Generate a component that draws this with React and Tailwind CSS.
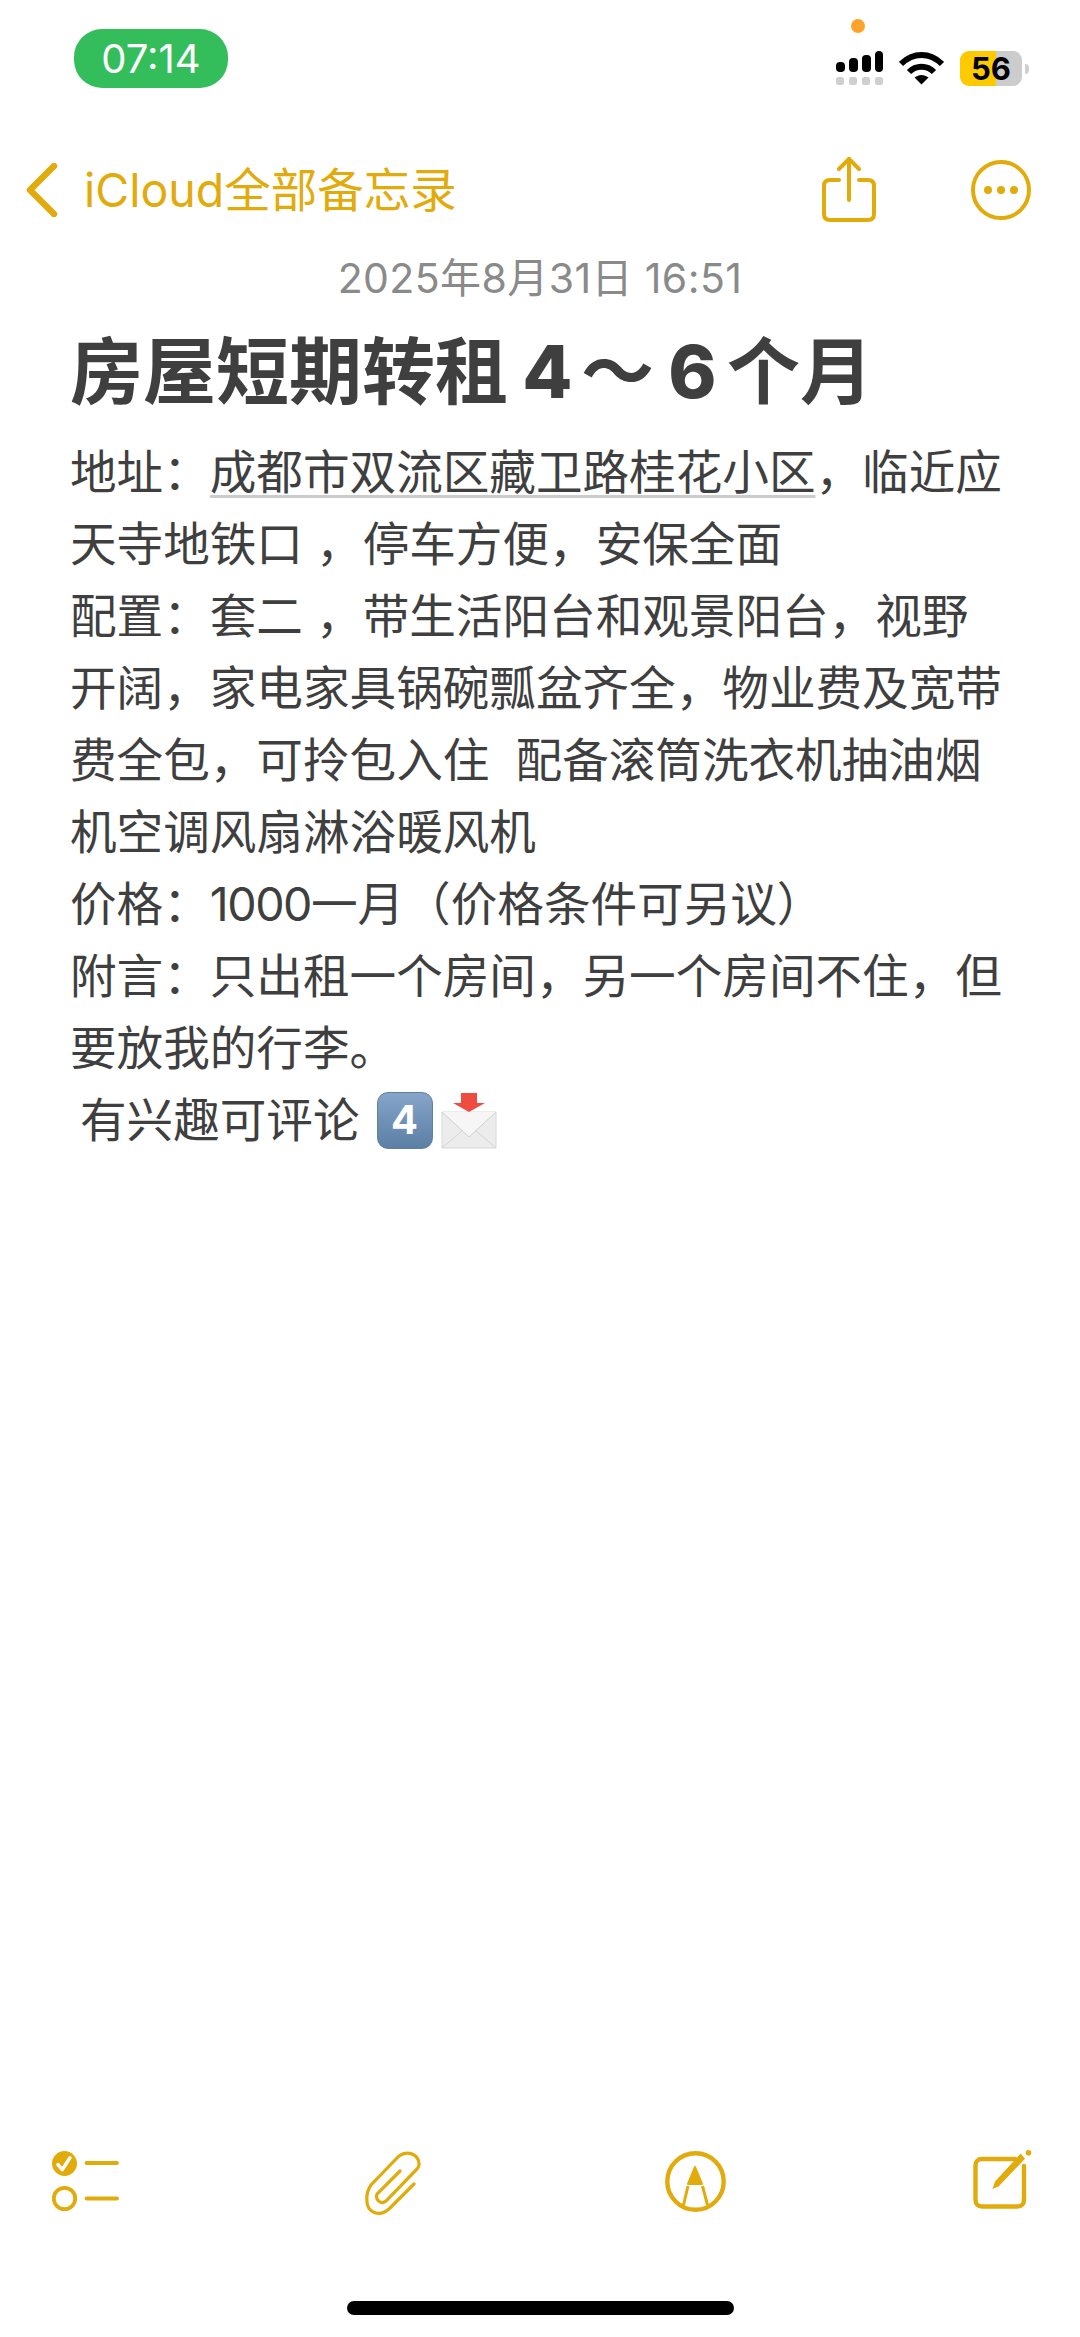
const ACCENT = '#e2ab0c';

const BODY_LINES = [
  '天寺地铁口 ，停车方便，安保全面',
  '配置：套二 ，带生活阳台和观景阳台，视野',
  '开阔，家电家具锅碗瓢盆齐全，物业费及宽带',
  '费全包，可拎包入住  配备滚筒洗衣机抽油烟',
  '机空调风扇淋浴暖风机',
  <>
    价格：<span className="tracking-[-1.5px]">1000</span>一月（价格条件可另议）
  </>,
  '附言：只出租一个房间，另一个房间不住，但',
  '要放我的行李。',
];

const SignalIcon = () => (
  <svg width="47" height="35" viewBox="0 0 47 35" fill="#000">
    <rect x="0" y="11" width="9" height="10" rx="4" />
    <rect x="13" y="7" width="9" height="14" rx="4" />
    <rect x="26" y="4" width="9" height="17" rx="4" />
    <rect x="39" y="0" width="8" height="21" rx="4" />
    <g fill="#cfcfcf">
      <rect x="0" y="26" width="8" height="8" rx="2.5" />
      <rect x="13" y="26" width="8" height="8" rx="2.5" />
      <rect x="26" y="26" width="8" height="8" rx="2.5" />
      <rect x="39" y="26" width="8" height="8" rx="2.5" />
    </g>
  </svg>
);

const WifiIcon = () => (
  <svg width="45" height="34" viewBox="0 0 45 34" fill="none" stroke="#000" strokeWidth="6">
    <path d="M2 13 C14 1 31 1 43 13" />
    <path d="M10 21 C17 14 28 14 35 21" />
    <path d="M15.5 26.5 L22.5 33.5 L29.5 26.5 C25 23 20 23 15.5 26.5 Z" fill="#000" stroke="none" />
  </svg>
);

const Battery = () => (
  <div className="flex items-center gap-[3px]">
    <div className="flex h-[35px] w-[62px] items-center justify-center rounded-[9px] bg-[linear-gradient(90deg,#fdca00_58%,#cccccc_58%)] text-[31px] leading-none font-bold text-black">
      56
    </div>
    <div className="h-[10px] w-[4px] rounded-r-full bg-[#cfcfcf]" />
  </div>
);

const ShareIcon = () => (
  <svg width="54" height="66" viewBox="0 0 54 66" fill="none" stroke={ACCENT} strokeWidth="4" strokeLinecap="round" strokeLinejoin="round">
    <path d="M17 23 H8 C4 23 2 25 2 29 V57 C2 61 4 63 8 63 H46 C50 63 52 61 52 57 V29 C52 25 50 23 46 23 H37" />
    <path d="M27 43 V2" />
    <path d="M17 12 L27 2 L37 12" />
  </svg>
);

const MoreIcon = () => (
  <svg width="60" height="60" viewBox="0 0 60 60" fill={ACCENT}>
    <circle cx="30" cy="30" r="28" fill="none" stroke={ACCENT} strokeWidth="4" />
    <circle cx="17" cy="30" r="4" />
    <circle cx="30" cy="30" r="4" />
    <circle cx="43" cy="30" r="4" />
  </svg>
);

const ChecklistIcon = () => (
  <svg width="67" height="61" viewBox="0 0 67 61" fill="none">
    <circle cx="12.5" cy="12.5" r="12.5" fill={ACCENT} />
    <path d="M6 13.6 L10.2 18.7 L18 6.8" stroke="#fff" strokeWidth="3.4" strokeLinecap="round" strokeLinejoin="round" />
    <circle cx="12.5" cy="47.5" r="10.7" stroke={ACCENT} strokeWidth="3.8" />
    <path d="M34.5 12 H65 M34.5 47.5 H65" stroke={ACCENT} strokeWidth="3.8" strokeLinecap="round" />
  </svg>
);

const ClipIcon = () => (
  <svg width="58" height="64" viewBox="0 0 58 64" fill="none" stroke={ACCENT} strokeWidth="3.2" strokeLinecap="round">
    <path d="M50 33 L25 58 C16 66 6 62 3.5 54 C2 47 3.5 39 7 34 L35 5 C43 -1 54 3 55 12 C55.5 15 54 17 53 18 L22 50 C17 54 11 49 13 43 L36 20" />
  </svg>
);

const MarkupIcon = () => (
  <svg width="61" height="61" viewBox="0 0 61 61" fill="none" stroke={ACCENT}>
    <circle cx="30.5" cy="30.5" r="28.2" strokeWidth="4.4" />
    <path d="M30 16 L37 33 H23 Z" fill={ACCENT} strokeWidth="2" strokeLinejoin="round" />
    <path d="M23 35 L18.5 54 M37.5 35 L42.5 54" strokeWidth="3" />
  </svg>
);

const ComposeIcon = () => (
  <svg width="59" height="60" viewBox="0 0 59 60" fill="none" stroke={ACCENT} strokeWidth="4.4" strokeLinecap="round">
    <path d="M42 9 H9 C5 9 2.5 11.5 2.5 15.5 V50 C2.5 54 5 56.5 9 56.5 H44.5 C48.5 56.5 51 54 51 50 V16" />
    <path d="M19.4 39 L22 31.5 L47.6 3.6 L52 8.7 L25.5 36.6 Z" fill={ACCENT} stroke="none" />
    <circle cx="55.5" cy="2.8" r="2.8" fill={ACCENT} stroke="none" />
  </svg>
);

const Keycap = () => (
  <div className="flex h-[57px] w-[56px] items-center justify-center rounded-[11px] border border-[#5f7fa3] bg-gradient-to-b from-[#86a5c9] to-[#5c7fa6] text-[40px] leading-none font-bold text-white">
    4
  </div>
);

const InboxEmoji = () => (
  <svg width="56" height="57" viewBox="0 0 56 57">
    <path d="M1 20 H55 V56 H1 Z" fill="#ececec" stroke="#d8d8d8" />
    <path d="M1 20 L28 45 L55 20" fill="#f6f6f6" stroke="#d0d0d0" />
    <path d="M1 56 L22 38 M55 56 L34 38" stroke="#d5d5d5" fill="none" />
    <path d="M20 1 H36 V11 H44 L28 20 L12 11 H20 Z" fill="#ee4c41" />
  </svg>
);

export default function App() {
  return (
    <div className="relative flex h-[2337px] w-[1080px] flex-col overflow-hidden bg-white font-['Inter','Noto_Sans_CJK_SC',sans-serif] text-[#3f3f3f]">
      {/* status bar */}
      <div className="flex h-[150px] items-start justify-between pt-[29px] pr-[51px] pl-[74px]">
        <div className="flex h-[59px] w-[154px] items-center justify-center rounded-[28px] bg-[#34bd5b] text-[40px] text-white">
          07:14
        </div>
        <div className="mt-[22px] flex items-start">
          <SignalIcon />
          <div className="mr-[16px] ml-[16px]">
            <WifiIcon />
          </div>
          <Battery />
        </div>
      </div>
      <div className="absolute top-[19px] left-[851px] h-[14px] w-[14px] rounded-full bg-[#fda32b]" />

      {/* nav */}
      <div className="flex h-[80px] items-center pr-[49px] pl-[26px] text-[#e2ab0c]">
        <svg width="32" height="54" viewBox="0 0 32 54" fill="none" stroke={ACCENT} strokeWidth="6.5" strokeLinecap="round" strokeLinejoin="round">
          <path d="M28 3 L4 27 L28 51" />
        </svg>
        <span className="ml-[26px] text-[46.5px] leading-none">iCloud全部备忘录</span>
        <div className="ml-auto flex items-center gap-[95px]">
          <ShareIcon />
          <MoreIcon />
        </div>
      </div>

      {/* note header */}
      <div className="mt-[24px] text-center text-[41px] leading-[48px] tracking-[0.4px] text-[#8a8a8a]">2025年8月31日 16:51</div>
      <h1 className="mt-[25px] pl-[70px] text-[73px] leading-[90px] font-bold whitespace-nowrap">
        房屋短期转租<span className="inline-block w-[73px] pl-[6px] text-center font-extrabold">4</span>～<span className="inline-block w-[73px] pl-[4px] text-center font-extrabold">6</span>个月
      </h1>

      {/* note body */}
      <div className="mt-[19px] pl-[70px] text-[46.6px] leading-[72px] whitespace-pre">
        <div>
          地址：
          <span className="underline decoration-[#cccccc] decoration-[3px] underline-offset-[6px]">成都市双流区藏卫路桂花小区</span>
          ，临近应
        </div>
        {BODY_LINES.map((line, i) => (
          <div key={i}>{line}</div>
        ))}
        <div className="flex items-center pl-[10px]">
          <span>有兴趣可评论</span>
          <div className="mr-[8px] ml-[17px]">
            <Keycap />
          </div>
          <InboxEmoji />
        </div>
      </div>

      {/* toolbar */}
      <div className="mt-auto flex items-start pl-[52px]">
        <div className="mt-px">
          <ChecklistIcon />
        </div>
        <div className="mt-px ml-[245px]">
          <ClipIcon />
        </div>
        <div className="mt-px ml-[243px]">
          <MarkupIcon />
        </div>
        <div className="ml-[247px]">
          <ComposeIcon />
        </div>
      </div>

      {/* home indicator */}
      <div className="mt-[86px] mb-[22px] flex justify-center">
        <div className="h-[14px] w-[387px] rounded-full bg-black" />
      </div>
    </div>
  );
}
